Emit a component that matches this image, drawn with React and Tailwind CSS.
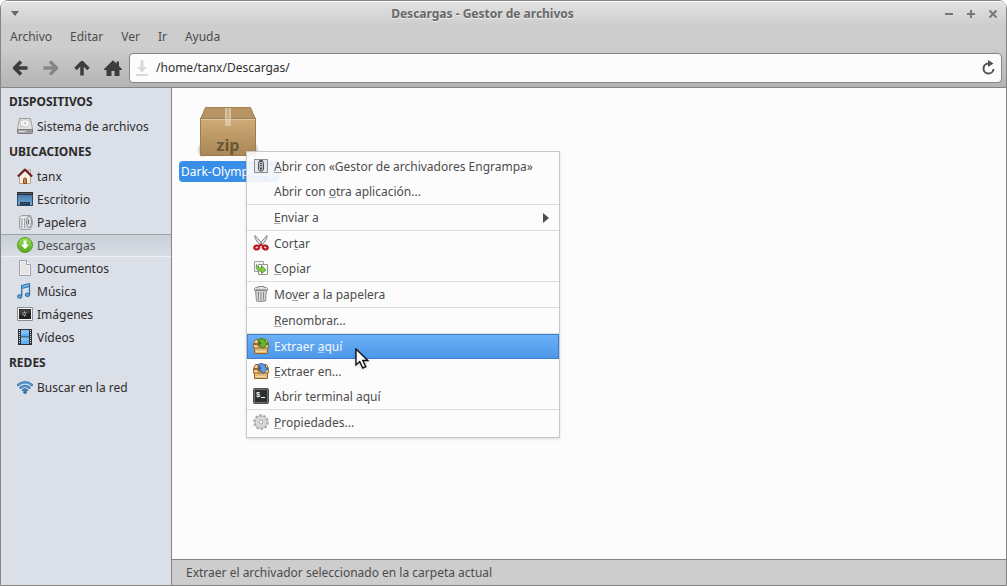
import React from 'react';

const DriveIcon = () => (
  <svg width="16" height="16" viewBox="0 0 16 16">
    <path d="M2.500.5h11l2 10.500v3.500q0 1-1 1h-13q-1 0-1-1V11z" fill="#e4e4e4" stroke="#a0a0a0" />
    <path d="M.5 11.500h15v3q0 1-1 1h-13q-1 0-1-1z" fill="#a8a8a8" stroke="#7b7b7b" />
    <ellipse cx="8" cy="5.500" rx="4.500" ry="3.700" fill="#f8f8f8" stroke="#c4c4c4" />
    <ellipse cx="8" cy="5.200" rx="1.500" ry="1.200" fill="#c8c8c8" />
    <path d="M3 9.500l3-2M3 2h1M12 2h1" stroke="#b4b4b4" />
    <path d="M2 13.500h6" stroke="#dedede" />
    <path d="M11 13.500h3" stroke="#666" strokeDasharray="1 1" />
  </svg>
);

const HouseIcon = () => (
  <svg width="16" height="16" viewBox="0 0 16 16">
    <path d="M11.500 1.500h2V6h-2z" fill="#eee3d5" stroke="#b5a798" />
    <path d="M2.500 8L8 2.800 13.500 8v7.500h-11z" fill="#f9f1e8" stroke="#b7a58f" />
    <path d="M.9 8.500L8 1.600l7.100 6.900" fill="none" stroke="#6e1f22" strokeWidth="2.100" strokeLinejoin="round" />
    <path d="M6.500 15.500V11.500q0-1.500 1.500-1.500t1.500 1.500v4z" fill="#d5823a" stroke="#8a4a14" />
  </svg>
);

const DesktopIcon = () => (
  <svg width="16" height="16" viewBox="0 0 16 16">
    <defs>
      <linearGradient id="desk" x1="0" y1="0" x2="0" y2="1">
        <stop offset="0" stopColor="#3d6c9e" />
        <stop offset="1" stopColor="#72aedb" />
      </linearGradient>
    </defs>
    <rect x=".5" y="1.500" width="15" height="13" fill="url(#desk)" stroke="#2a4a6b" />
    <path d="M0 1h16v3H0z" fill="#2b2f33" />
    <path d="M1 2.500h14" stroke="#555b61" />
    <path d="M3 11h10v3H3z" fill="#20364c" />
    <path d="M4 12.500h8" stroke="#41566b" />
  </svg>
);

const BinIcon = () => (
  <svg width="16" height="16" viewBox="0 0 16 16">
    <path d="M2.500 3.500Q3 1.500 6 1.500h7q1 0 1 1v2q1.500.5 1.500 2v4q0 1.500-1.500 2V14q0 1.500-2 1.500H5q-2.500 0-2.500-2z" fill="#dcdee0" stroke="#9b9ea2" />
    <path d="M5 4v10M7.500 4v10" stroke="#a2a6aa" strokeWidth="1.300" />
    <path d="M6.300 4v10" stroke="#f5f5f5" />
    <ellipse cx="12" cy="8" rx="2.500" ry="5.500" fill="#eceded" stroke="#85898e" />
    <path d="M11.500 5.500v5" stroke="#6c7075" strokeWidth="1.400" />
    <path d="M3 3.500h6" stroke="#f9f9f9" />
  </svg>
);

const DownloadIcon = () => (
  <svg width="16" height="16" viewBox="0 0 16 16">
    <defs>
      <linearGradient id="down" x1="0" y1="0" x2="0" y2="1">
        <stop offset="0" stopColor="#9add58" />
        <stop offset="1" stopColor="#56a917" />
      </linearGradient>
    </defs>
    <circle cx="8" cy="8" r="7.500" fill="url(#down)" stroke="#539b22" />
    <path d="M6.600 3.500h2.800v4H12l-4 4.700-4-4.700h2.600z" fill="#fff" />
  </svg>
);

const DocumentIcon = () => (
  <svg width="16" height="16" viewBox="0 0 16 16">
    <path d="M2.500.5h7l4 4v11h-11z" fill="#f2f2f2" stroke="#a0a0a0" />
    <path d="M4 2h5v3.500h3V14H4z" fill="#e5e5e5" />
    <path d="M9.500.5v4h4" fill="#fff" stroke="#a0a0a0" />
  </svg>
);

const MusicIcon = () => (
  <svg width="16" height="16" viewBox="0 0 16 16">
    <path d="M4.500 2.500l8-2v3l-7 1.800" fill="#7ab8e6" stroke="#2b6ea7" />
    <path d="M4.700 2v11M12.500.5v11" stroke="#2f75b0" strokeWidth="1.300" />
    <ellipse cx="2.700" cy="13.500" rx="2.200" ry="1.800" fill="#5ba3dc" stroke="#2b6ea7" />
    <ellipse cx="10.500" cy="11.800" rx="2.200" ry="1.800" fill="#5ba3dc" stroke="#2b6ea7" />
  </svg>
);

const PictureIcon = () => (
  <svg width="16" height="16" viewBox="0 0 16 16">
    <path d="M.5 1.500h15v13H.5z" fill="#f5f5f5" stroke="#8c8c8c" />
    <path d="M2 3h12v10H2z" fill="#202020" />
    <path d="M2.500 3.500h11v3l-11 3z" fill="#404040" />
    <path d="M7.500 5.500v5M5.500 6.500l4 3M5.500 9.500l4-3" stroke="#b4b4b4" />
    <circle cx="7.500" cy="8" r="1" fill="#4b4b4b" />
  </svg>
);

const VideoIcon = () => (
  <svg width="16" height="16" viewBox="0 0 16 16">
    <path d="M1 0h14v16H1z" fill="#2e3134" />
    <path d="M4 1h8v6.500H4zM4 8.500h8V15H4z" fill="#62adf0" />
    <path d="M4 1h8v3L4 6zM4 8.500h8v2L4 13z" fill="#7fc0f7" />
    <path d="M2.500 1v14M13.500 1v14" stroke="#e9e9e9" strokeDasharray="1 1" />
  </svg>
);

const NetworkIcon = () => (
  <svg width="16" height="16" viewBox="0 0 16 16" fill="none" strokeLinecap="round">
    <path d="M1.200 6Q8 .5 14.800 6" stroke="#3478b4" strokeWidth="2.400" />
    <path d="M1.600 5.900Q8 1 14.400 5.900" stroke="#69aee0" />
    <path d="M3.600 8.800Q8 5.200 12.400 8.800" stroke="#347ab8" strokeWidth="2.400" />
    <path d="M4 8.600Q8 5.600 12 8.600" stroke="#62a6da" strokeWidth=".8" />
    <path d="M5.800 11.300Q8 9.500 10.200 11.300" stroke="#3475b0" strokeWidth="2" />
    <circle cx="8" cy="13.200" r="1.700" fill="#2d6ba5" />
  </svg>
);

const BackIcon = () => (
  <svg width="16" height="16" viewBox="0 0 16 16" fill="none" stroke="currentColor" strokeWidth="3.500">
    <path d="M9 1.500L2.500 8 9 14.500M3 8h12.500" strokeLinejoin="round" />
  </svg>
);

const ForwardIcon = () => (
  <svg width="16" height="16" viewBox="0 0 16 16" fill="none" stroke="currentColor" strokeWidth="3.500">
    <path d="M7 1.500L13.500 8 7 14.500M13 8H.5" strokeLinejoin="round" />
  </svg>
);

const UpIcon = () => (
  <svg width="16" height="16" viewBox="0 0 16 16" fill="none" stroke="currentColor" strokeWidth="3.500">
    <path d="M1.500 9L8 2.500 14.500 9M8 3v12.500" strokeLinejoin="round" />
  </svg>
);

const HomeIcon = () => (
  <svg width="18" height="16" viewBox="0 0 18 16" fill="currentColor">
    <path d="M9 .3l3.500 3.400V1.500H15v4.700L17.900 9v1H15.500v6h-5v-5h-3v5h-5v-6H.1V9z" />
  </svg>
);

const FolderMark = () => (
  <svg width="12" height="16" viewBox="0 0 12 16" fill="#d9d9d9">
    <path d="M4.500 0h3v7H11l-5 5.500L1 7h3.500zM0 14h12v2H0z" />
  </svg>
);

const ReloadIcon = () => (
  <svg width="14" height="16" viewBox="0 0 14 16">
    <path d="M7.500 3.500A5 5 0 1 0 12.500 9" fill="none" stroke="#505050" strokeWidth="2" />
    <path d="M7 0l5.500 3.500L7 7z" fill="#505050" />
  </svg>
);

const PackageIcon = () => (
  <svg width="66" height="54" viewBox="0 0 66 54">
    <defs>
      <linearGradient id="front" x1="0" y1="0" x2="0" y2="1">
        <stop offset="0" stopColor="#ceab77" />
        <stop offset="1" stopColor="#a98756" />
      </linearGradient>
      <radialGradient id="shade">
        <stop offset="0" stopColor="#777" stopOpacity=".7" />
        <stop offset="1" stopColor="#777" stopOpacity="0" />
      </radialGradient>
    </defs>
    <ellipse cx="6" cy="45" rx="5" ry="8" fill="url(#shade)" />
    <ellipse cx="58" cy="45" rx="5" ry="8" fill="url(#shade)" />
    <path d="M9.500 2.500h45L59.500 14h-55z" fill="#b89465" stroke="#a2814f" />
    <path d="M4.500 13.500h55v37h-55z" fill="url(#front)" stroke="#9a7c50" strokeLinejoin="round" />
    <path d="M5 14.500h54" stroke="#dfc7a0" />
    <path d="M29 3h6v18h-6z" fill="#e3d3b8" opacity=".7" />
    <path d="M32 3v11" stroke="#b39b74" />
    <text x="32" y="46" textAnchor="middle" fontSize="16" fontWeight="700" fill="#695733" className="font-['Open_Sans',sans-serif]">zip</text>
  </svg>
);

const EngrampaIcon = () => (
  <svg width="16" height="16" viewBox="0 0 16 16">
    <rect x="1.500" y="1.500" width="13" height="13" fill="#e4e6e8" stroke="#8b9197" />
    <path d="M6.500 2.500h3l1 3v6l-1 1.500h-3l-1-1.500v-6z" fill="#b9bdc1" stroke="#474e55" />
    <path d="M8 3v5" stroke="#474e55" strokeWidth="2" strokeDasharray="1 1" />
    <path d="M7 9.500h2v2H7z" fill="#474e55" />
  </svg>
);

const CutIcon = () => (
  <svg width="16" height="16" viewBox="0 0 16 16">
    <path d="M2 .5q-.5 3.500 5 9.500l2-1.500zM14 .5q.5 3.500-5 9.500L7 8.500z" fill="#ececec" stroke="#7e817c" />
    <path d="M8 8.500l-2.500 2.500h5z" fill="#b8181e" />
    <g fill="#f3d4d4" stroke="#b8181e" strokeWidth="2.200">
      <ellipse cx="3.800" cy="12.500" rx="2.500" ry="1.900" transform="rotate(-15 3.800 12.500)" />
      <ellipse cx="12.200" cy="12.500" rx="2.500" ry="1.900" transform="rotate(15 12.200 12.500)" />
    </g>
  </svg>
);

const CopyIcon = () => (
  <svg width="16" height="16" viewBox="0 0 16 16">
    <path d="M1.500 1.500h9v10h-9z" fill="#f4f4f4" stroke="#a0a0a0" />
    <path d="M5.500 4.500h9v10h-9z" fill="#f9f9f9" stroke="#909090" />
    <path d="M3.500 4.500q0 3.500 5 3.500V5.500l4.500 4.500-4.500 3.500v-2.300Q2 11.200 3.500 4.500z" fill="#87cc4a" stroke="#5b9f37" />
  </svg>
);

const TrashIcon = () => (
  <svg width="16" height="16" viewBox="0 0 16 16">
    <path d="M2.500 4.500h11L12.500 15q-4.500 1.300-9 0z" fill="#d2d2d2" stroke="#8f8f8f" />
    <path d="M5.500 6l.4 8M8 6v8.500M10.500 6l-.4 8" stroke="#808080" strokeWidth="1.200" />
    <path d="M6.700 6v8M9.200 6v8" stroke="#f0f0f0" strokeWidth=".8" />
    <path d="M1.500 2.500Q1.500 1.500 5 1.500V.5h6v1q3.500 0 3.500 1v2h-13z" fill="#e4e4e4" stroke="#8a8a8a" />
    <path d="M3 3.500h10" stroke="#a5a5a5" />
  </svg>
);

const ExtractIcon = ({ fill, stroke }) => (
  <svg width="16" height="16" viewBox="0 0 16 16">
    <path d="M2 3.500h12l1.500 4H.5z" fill="#8a5f2a" stroke="#80551d" />
    <path d="M2.500 1.500h4l-2 4h-4zM11.500 1.500h2l2 4h-3z" fill="#f0d4a0" stroke="#9a682c" />
    <path d="M1.500 7.500h13v8h-13z" fill="#e2bb78" stroke="#96652a" />
    <path d="M.5 6.500h4l1.500 2.500h4.500l1.500-2.500h3.500v3.500H.5z" fill="#f0d29a" stroke="#96652a" />
    <path d="M3 13.500h10" stroke="#f2d9a7" />
    <path d="M4.500 3Q6-.2 9.500.7q3.500.8 3.500 4.300h2L10.500 10.500 5.500 5.500h2.700Q7.500 3 4.500 3z" fill={fill} stroke={stroke} />
  </svg>
);

const TerminalIcon = () => (
  <svg width="16" height="16" viewBox="0 0 16 16">
    <rect x=".5" y=".5" width="15" height="15" rx="1" fill="#2c2f30" stroke="#4b4d4e" />
    <rect x="1.500" y="1.500" width="13" height="13" fill="none" stroke="#6d7071" />
    <text x="3" y="9" fontSize="7" fontWeight="700" fill="#f4f4f4" className="font-['Liberation_Mono',monospace]">$</text>
    <path d="M8 9.500h4" stroke="#fff" />
  </svg>
);

const GearIcon = () => (
  <svg width="16" height="16" viewBox="0 0 16 16">
    <circle cx="8" cy="8" r="6.700" fill="none" stroke="#a8a8a8" strokeWidth="2.200" strokeDasharray="2.600 1.610" />
    <circle cx="8" cy="8" r="5.900" fill="#e2e2e2" stroke="#b0b0b0" />
    <circle cx="8" cy="8" r="4" fill="none" stroke="#cecece" />
    <circle cx="8" cy="8" r="2" fill="#fcfcfc" stroke="#a0a0a0" />
  </svg>
);

const Cursor = () => (
  <svg width="16" height="22" viewBox="0 0 16 22" className="absolute left-[108px] top-[196px] drop-shadow">
    <path d="M1 1v16l3.700-3.400L7.800 20l3-1.400-3-6.100h5z" fill="#fff" stroke="#111" strokeWidth="1.400" />
  </svg>
);

const menus = ['Archivo', 'Editar', 'Ver', 'Ir', 'Ayuda'];

const sections = [
  { title: 'DISPOSITIVOS', places: [{ name: 'Sistema de archivos', icon: <DriveIcon /> }] },
  {
    title: 'UBICACIONES',
    places: [
      { name: 'tanx', icon: <HouseIcon /> },
      { name: 'Escritorio', icon: <DesktopIcon /> },
      { name: 'Papelera', icon: <BinIcon /> },
      { name: 'Descargas', icon: <DownloadIcon />, current: true },
      { name: 'Documentos', icon: <DocumentIcon /> },
      { name: 'Música', icon: <MusicIcon /> },
      { name: 'Imágenes', icon: <PictureIcon /> },
      { name: 'Vídeos', icon: <VideoIcon /> },
    ],
  },
  { title: 'REDES', places: [{ name: 'Buscar en la red', icon: <NetworkIcon /> }] },
];

// label is split as [before, mnemonic, after]
const actionGroups = [
  [
    { label: ['', 'A', 'brir con «Gestor de archivadores Engrampa»'], icon: <EngrampaIcon /> },
    { label: ['Abrir con ', 'o', 'tra aplicación...'] },
  ],
  [{ label: ['', 'E', 'nviar a'], submenu: true }],
  [
    { label: ['Cor', 't', 'ar'], icon: <CutIcon /> },
    { label: ['', 'C', 'opiar'], icon: <CopyIcon /> },
  ],
  [{ label: ['Mo', 'v', 'er a la papelera'], icon: <TrashIcon /> }],
  [{ label: ['', 'R', 'enombrar...'] }],
  [
    { label: ['Extraer ', 'a', 'quí'], icon: <ExtractIcon fill="#65b82e" stroke="#347d13" />, active: true },
    { label: ['', 'E', 'xtraer en...'], icon: <ExtractIcon fill="#6598dc" stroke="#2c5da5" /> },
    { label: ['Abrir terminal aquí', '', ''], icon: <TerminalIcon /> },
  ],
  [{ label: ['', 'P', 'ropiedades...'], icon: <GearIcon /> }],
];

const TitleBar = () => (
  <div className="flex h-6 items-center rounded-t-md border-t border-white bg-linear-to-b from-[#e3e3e3] to-[#cdcdcd] px-2">
    <button aria-label="Menú de ventana" className="flex w-3 justify-center">
      <svg width="8" height="5" viewBox="0 0 8 5"><path d="M0 0h8L4 5z" fill="#666" /></svg>
    </button>
    <h1 className="flex-1 text-center font-bold text-[#686868] [text-shadow:0_1px_0_#eee]">Descargas - Gestor de archivos</h1>
    <div className="flex gap-3 text-[#777]">
      <button aria-label="Minimizar">
        <svg width="10" height="10" viewBox="0 0 10 10"><path d="M1 5h8" stroke="currentColor" strokeWidth="2" /></svg>
      </button>
      <button aria-label="Maximizar">
        <svg width="10" height="10" viewBox="0 0 10 10"><path d="M1 5h8M5 1v8" stroke="currentColor" strokeWidth="2" /></svg>
      </button>
      <button aria-label="Cerrar">
        <svg width="10" height="10" viewBox="0 0 10 10"><path d="M1.500 1.500l7 7M8.500 1.500l-7 7" stroke="currentColor" strokeWidth="2" /></svg>
      </button>
    </div>
  </div>
);

const Toolbar = () => (
  <div className="flex items-center bg-linear-to-b from-[#cbcbcb] to-[#b4b4b4] py-1 pr-1 pl-[3px] text-[#3c3c3c]">
    <button aria-label="Atrás" className="flex w-[31px] justify-center"><BackIcon /></button>
    <button aria-label="Adelante" disabled className="flex w-[31px] justify-center text-[#868686]"><ForwardIcon /></button>
    <button aria-label="Subir" className="flex w-[31px] justify-center"><UpIcon /></button>
    <button aria-label="Carpeta personal" className="flex w-[31px] justify-center"><HomeIcon /></button>
    <div className="ml-px flex h-[30px] flex-1 items-center rounded-sm border border-[#858585] bg-[#fcfcfc] px-[6px]">
      <FolderMark />
      <input
        aria-label="Ubicación"
        defaultValue="/home/tanx/Descargas/"
        className="ml-2 min-w-0 flex-1 bg-transparent text-[#303030] outline-none"
      />
      <button aria-label="Recargar"><ReloadIcon /></button>
    </div>
  </div>
);

const Sidebar = () => (
  <nav className="w-[171px] shrink-0 border-r border-[#858585] bg-[#dbdfe7] text-[#2c2c2c]">
    {sections.map((section) => (
      <section key={section.title}>
        <h2 className="h-[27px] pl-2 leading-[27px] font-bold">{section.title}</h2>
        <ul>
          {section.places.map((place) => (
            <li key={place.name}>
              <a
                href="#"
                className={
                  place.current
                    ? 'flex h-[23px] items-center gap-1 border-t border-b border-t-[#a0a2a5] border-b-[#eceef1] bg-linear-to-b from-[#c9d0d9] to-[#d9dde4] pl-4 text-[#4c4c4c]'
                    : 'flex h-[23px] items-center gap-1 pl-4'
                }
              >
                <span className="h-[17px] w-4">{place.icon}</span>
                {place.name}
              </a>
            </li>
          ))}
        </ul>
      </section>
    ))}
  </nav>
);

const ActionItem = ({ action }) => {
  const [before, key, after] = action.label;
  return (
    <button
      role="menuitem"
      className={
        action.active
          ? 'flex h-[25px] w-full items-center border border-[#3f81cc] bg-linear-to-b from-[#6ab0f8] to-[#4e98e9] pr-[9px] pl-[5px] text-[#f2f7fd]'
          : 'flex h-[25px] w-full items-center pr-[10px] pl-[6px]'
      }
    >
      <span className="mr-[5px] h-[17px] w-4">{action.icon}</span>
      <span className="flex-1 text-left whitespace-pre">
        {before}
        <u className="decoration-current/50 underline-offset-1">{key}</u>
        {after}
      </span>
      {action.submenu && (
        <svg width="6" height="10" viewBox="0 0 6 10"><path d="M0 0l6 5-6 5z" fill="#4c4c4c" /></svg>
      )}
    </button>
  );
};

const ContextMenu = () => (
  <div
    role="menu"
    className="absolute top-[63px] left-[74px] w-[314px] border border-[#c8c8c8] bg-[#fcfcfc]/92 py-[2px] text-[#4c4c4c] shadow-sm"
  >
    {actionGroups.map((group, index) => (
      <div key={index} className="border-t border-[#dedede] first:border-t-0">
        {group.map((action) => (
          <ActionItem key={action.label.join('')} action={action} />
        ))}
      </div>
    ))}
    <Cursor />
  </div>
);

const App = () => {
  return (
    <div className="flex min-h-screen flex-col rounded-t-lg border border-[#858585] bg-[#cdcdcd] font-['Noto_Sans',sans-serif] text-[12px] leading-4">
      <header className="border-b border-[#858585]">
        <TitleBar />
        <div className="flex h-6 items-center gap-[18px] px-[9px] text-[#4c4c4c]">
          {menus.map((menu) => (
            <button key={menu}>{menu}</button>
          ))}
        </div>
        <Toolbar />
      </header>
      <div className="flex flex-1">
        <Sidebar />
        <div className="flex min-w-0 flex-1 flex-col">
          <main className="relative flex-1 bg-[#fcfcfc] p-[7px] pt-[17px]">
            <button className="flex flex-col items-center">
              <PackageIcon />
              <span className="mt-[2px] rounded-sm bg-[#398ee7] px-[2px] py-[2px] leading-[17px] text-white">Dark-Olympic.zip</span>
            </button>
            <ContextMenu />
          </main>
          <footer className="border-t border-[#858585] px-[14px] py-1 leading-[17px] text-[#4c4c4c]">
            Extraer el archivador seleccionado en la carpeta actual
          </footer>
        </div>
      </div>
    </div>
  );
};

export default App;
